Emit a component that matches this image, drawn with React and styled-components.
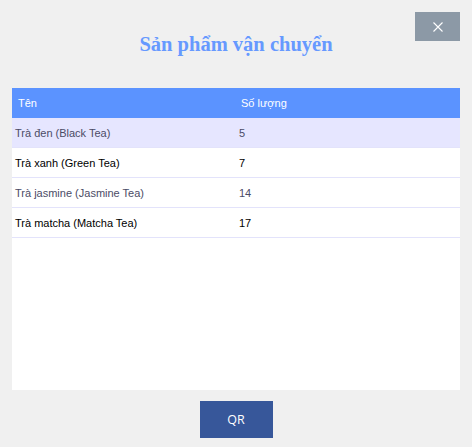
import React from 'react';
import styled, { createGlobalStyle } from 'styled-components';

const GlobalStyle = createGlobalStyle`
  html, body {
    margin: 0;
    padding: 0;
    background: #f0f0f0;
  }
`;

const Window = styled.div`
  width: 472px;
  height: 447px;
  background: #f0f0f0;
  display: flex;
  flex-direction: column;
  box-sizing: border-box;
`;

const Header = styled.div`
  display: grid;
  grid-template-columns: 1fr auto 1fr;
  height: 88px;
  padding: 12px 12px 0;
  box-sizing: border-box;
`;

const Title = styled.h1`
  grid-column: 2;
  margin: 20px 0 0;
  font-family: 'Liberation Serif', 'Times New Roman', serif;
  font-weight: bold;
  font-size: 20.5px;
  line-height: 24px;
  color: #6699ff;
`;

const CloseButton = styled.button`
  grid-column: 3;
  justify-self: end;
  align-self: start;
  width: 45px;
  height: 29px;
  border: none;
  padding: 0;
  background: #8c99a6;
  display: flex;
  align-items: center;
  justify-content: center;
  cursor: pointer;
`;

const Table = styled.div`
  margin: 0 12px;
  height: 302px;
  background: #ffffff;
  display: flex;
  flex-direction: column;
  font-family: 'Liberation Sans', Arial, sans-serif;
  font-size: 11px;
`;

const HeadRow = styled.div`
  display: grid;
  grid-template-columns: 223px 1fr;
  height: 30px;
  align-items: center;
  background: #5b93ff;
  color: #ffffff;
`;

const HeadCell = styled.div`
  padding-left: 6px;
`;

const Row = styled.div`
  display: grid;
  grid-template-columns: 223px 1fr;
  height: 29px;
  align-items: center;
  border-bottom: 1px solid #e3e3fb;
  background: ${(p) => (p.$selected ? '#e6e6ff' : '#ffffff')};
  color: ${(p) => (p.$alt ? '#4b4b66' : '#000000')};
`;

const Cell = styled.div`
  padding-left: ${(p) => (p.$num ? '4px' : '3px')};
`;

const Footer = styled.div`
  display: flex;
  justify-content: center;
  padding-top: 11px;
`;

const QrButton = styled.button`
  width: 73px;
  height: 37px;
  border: none;
  background: #37579a;
  color: #ffffff;
  font-family: 'Open Sans', 'Noto Sans', sans-serif;
  font-weight: 400;
  font-size: 12.5px;
  cursor: pointer;
`;

const products = [
  { name: 'Trà đen (Black Tea)', qty: 5 },
  { name: 'Trà xanh (Green Tea)', qty: 7 },
  { name: 'Trà jasmine (Jasmine Tea)', qty: 14 },
  { name: 'Trà matcha (Matcha Tea)', qty: 17 },
];

const App = () => {
  return (
    <>
      <GlobalStyle />
      <Window>
        <Header>
          <Title>Sản phẩm vận chuyển</Title>
          <CloseButton aria-label="Đóng">
            <svg width="10" height="10" viewBox="0 0 10 10">
              <path d="M0.5 0.5 L9.5 9.5 M9.5 0.5 L0.5 9.5" stroke="#ffffff" strokeWidth="1.1" fill="none" />
            </svg>
          </CloseButton>
        </Header>
        <Table>
          <HeadRow>
            <HeadCell>Tên</HeadCell>
            <HeadCell>Số lượng</HeadCell>
          </HeadRow>
          {products.map((el, i) => (
            <Row key={i} $selected={i === 0} $alt={i % 2 === 0}>
              <Cell>{el.name}</Cell>
              <Cell $num>{el.qty}</Cell>
            </Row>
          ))}
        </Table>
        <Footer>
          <QrButton>QR</QrButton>
        </Footer>
      </Window>
    </>
  );
};

export default App;
